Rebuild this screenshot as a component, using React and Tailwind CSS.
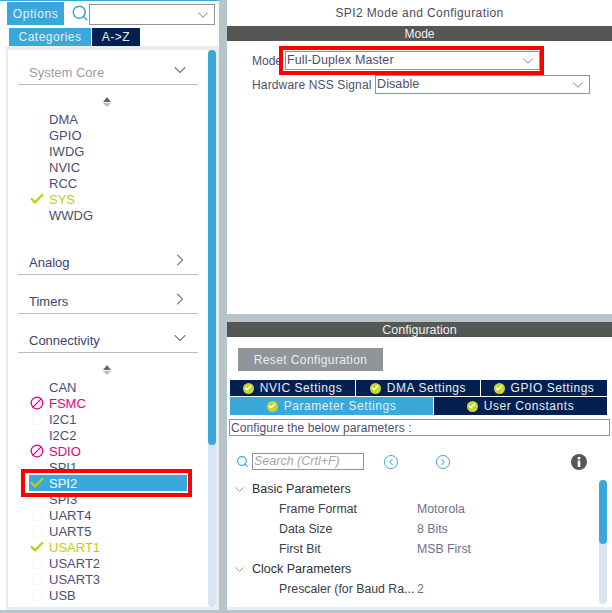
import React from 'react';
import { Search, ChevronDown, ChevronRight, ChevronLeft, Check, Ban } from 'lucide-react';

const systemCore = [
  { name: 'DMA' }, { name: 'GPIO' }, { name: 'IWDG' }, { name: 'NVIC' }, { name: 'RCC' },
  { name: 'SYS', state: 'ok' }, { name: 'WWDG' },
];

const connectivity = [
  { name: 'CAN' }, { name: 'FSMC', state: 'off' }, { name: 'I2C1' }, { name: 'I2C2' },
  { name: 'SDIO', state: 'off' }, { name: 'SPI1' }, { name: 'SPI2', state: 'selected' }, { name: 'SPI3' },
  { name: 'UART4' }, { name: 'UART5' }, { name: 'USART1', state: 'ok' }, { name: 'USART2' },
  { name: 'USART3' }, { name: 'USB' },
];

function SortArrows() {
  return (
    <div className="mt-3 ml-[95px] flex h-[10px] w-2 flex-col items-center gap-px">
      <div className="h-0 w-0 border-x-4 border-b-[5px] border-x-transparent border-b-[#666]"></div>
      <div className="h-0 w-0 border-x-4 border-t-[4px] border-x-transparent border-t-[#bbb]"></div>
    </div>
  );
}

function SectionHeader({ title, open, dim, className }) {
  return (
    <div className={`ml-[10px] flex h-[23px] w-[180px] items-start justify-between border-b border-[#b4bfc6] pl-[11px] pr-[8px] text-[13px] leading-[22px] ${dim ? 'text-[#9a9ca3]' : 'text-[#3a4474]'} ${className}`}>
      <span>{title}</span>
      {open
        ? <ChevronDown className="-mt-0.5 h-5 w-5 shrink-0 text-[#7b7f84]" strokeWidth={1.3} />
        : <ChevronRight className="-mt-0.5 h-5 w-5 shrink-0 text-[#7b7f84]" strokeWidth={1.3} />}
    </div>
  );
}

function PeripheralRow({ item }) {
  if (item.state === 'selected') {
    return (
      <div className="relative ml-[21px] h-4 w-[158px]">
        <div className="absolute -top-1.5 -bottom-1.5 -left-2 -right-[5px] z-10 border-4 border-[#f00] bg-white"></div>
        <div className="relative z-20 flex h-4 items-center bg-[#39a9dc] text-[13px] leading-[18px] text-white">
          <span className="flex w-5 justify-center pr-1"><Check className="h-4 w-4 text-[#c3d100]" strokeWidth={3.5} /></span>
          <span className="pt-[2px]">{item.name}</span>
        </div>
      </div>
    );
  }
  const color = item.state === 'ok' ? 'text-[#bfcf0c]' : item.state === 'off' ? 'text-[#e5007e]' : 'text-[#4b4f6e]';
  return (
    <div className={`ml-[21px] flex h-4 w-[158px] items-center text-[13px] leading-[18px] ${color}`}>
      <span className="flex w-5 justify-center pr-1">
        {item.state === 'ok' && <Check className="h-4 w-4 text-[#bfcf0c]" strokeWidth={3.5} />}
        {item.state === 'off' && <Ban className="h-[14px] w-[14px] -scale-x-100 text-[#e5007e]" strokeWidth={2.2} />}
        {!item.state && <span className="h-[11px] w-[10px] border border-[#f8f9fa]"></span>}
      </span>
      <span className="pt-[2px]">{item.name}</span>
    </div>
  );
}

function Dropdown({ value, className }) {
  return (
    <div className={`flex h-[19px] items-center justify-between border border-[#8f9499] pl-[1px] pr-[2px] text-[12.5px] leading-none tracking-[0.1px] text-[#4b4f6e] ${className}`}>
      <span>{value}</span>
      <ChevronDown className="h-[18px] w-[18px] text-[#7b7f84]" strokeWidth={1.3} />
    </div>
  );
}

function TabBtn({ label, active, className }) {
  return (
    <div className={`flex items-center justify-center gap-[6px] text-[12px] tracking-[0.55px] text-[#e9eef2] ${active ? 'bg-[#39a9dc]' : 'bg-[#002051]'} ${className}`}>
      <span className="flex h-[11px] w-[11px] items-center justify-center rounded-full bg-[#c9d62c]">
        <Check className="h-2 w-2 text-white" strokeWidth={4} />
      </span>
      {label}
    </div>
  );
}

function ParamGroup({ title }) {
  return (
    <div className="flex h-5 items-center pl-[5px] text-[12.5px] text-[#2c3038]">
      <ChevronDown className="mr-[5px] h-[15px] w-[15px] text-[#7b7f84]" strokeWidth={1.3} />
      {title}
    </div>
  );
}

function ParamRow({ label, value }) {
  return (
    <div className="flex h-5 items-center pl-[52px] text-[12.3px]">
      <span className="w-[138px] text-[#3c4048]">{label}</span>
      <span className="text-[#6a7388]">{value}</span>
    </div>
  );
}

export default function App() {
  return (
    <div className="flex h-[613px] w-[612px] overflow-hidden bg-[#b9c4ca] font-['Liberation_Sans',Arial,sans-serif]">
      {/* left tree */}
      <div className="flex h-[610px] w-[219px] shrink-0 flex-col border-t border-[#39a9dc] bg-white">
        <div className="flex h-[27px] items-start pt-[1px] pl-[7px]">
          <div className="flex h-[23px] w-[57px] items-center justify-center bg-[#39a9dc] text-[12px] tracking-[0.6px] text-[#e9eef2]">Options</div>
          <Search className="ml-[7px] mt-[2px] h-[18px] w-[18px] text-[#39a9dc]" strokeWidth={2} />
          <div className="mt-[2px] flex h-[21px] w-[126px] items-center justify-end border border-[#8f9499] pr-[2px]">
            <ChevronDown className="h-[18px] w-[18px] text-[#7b7f84]" strokeWidth={1.3} />
          </div>
        </div>
        <div className="ml-[9px] flex h-[18px] gap-px text-[12px] tracking-[0.5px]">
          <div className="flex w-[82px] items-center justify-center bg-[#39a9dc] text-[#e9eef2]">Categories</div>
          <div className="flex w-[48px] items-center justify-center bg-[#002051] text-[#e9eef2]">A-&gt;Z</div>
        </div>
        <div className="ml-[6px] flex min-h-0 flex-1 bg-[#e9eef2] pt-1 pr-[3px] pb-[3px] pl-[2px]">
          <div className="relative flex flex-1 bg-white">
            <div className="w-[200px]">
              <SectionHeader title="System Core" open dim className="mt-3" />
              <SortArrows />
              <div className="mt-1">
                {systemCore.map((item) => <PeripheralRow key={item.name} item={item} />)}
              </div>
              <SectionHeader title="Analog" className="mt-[29px]" />
              <SectionHeader title="Timers" className="mt-4" />
              <SectionHeader title="Connectivity" open className="mt-4" />
              <SortArrows />
              <div className="mt-1">
                {connectivity.map((item) => <PeripheralRow key={item.name} item={item} />)}
              </div>
            </div>
            <div className="w-2 rounded-full bg-[#d8e6f4]">
              <div className="h-[395px] rounded-full bg-[#39a9dc]"></div>
            </div>
          </div>
        </div>
      </div>

      {/* right side */}
      <div className="ml-2 flex w-[385px] flex-col">
        <div className="h-[314px] bg-white">
          <div className="flex h-[26px] items-center justify-center text-[12px] tracking-[0.4px] text-[#4b4f5e]">SPI2 Mode and Configuration</div>
          <div className="flex h-[15px] items-center justify-center bg-[#555755] text-[12px] text-[#f0f0f0]">Mode</div>
          <div className="mt-[10px] flex items-center pl-[25px] text-[12px] text-[#4b4f6e]">
            <span className="w-[33px] shrink-0">Mode</span>
            <div className="relative">
              <Dropdown value="Full-Duplex Master" className="w-[255px]" />
              <div className="absolute -top-[5px] -bottom-[5px] -left-1.5 -right-1 border-4 border-[#f00]"></div>
            </div>
          </div>
          <div className="mt-[5px] flex items-center pl-[25px] text-[12px] text-[#4b4f6e]">
            <span className="w-[123px] shrink-0 whitespace-nowrap tracking-[0.15px]">Hardware NSS Signal</span>
            <Dropdown value="Disable" className="w-[215px]" />
          </div>
        </div>

        <div className="mt-2 flex h-[288px] flex-col bg-white">
          <div className="flex h-[15px] shrink-0 items-center justify-center bg-[#555755] pt-px text-[12.5px] text-[#f0f0f0]">Configuration</div>
          <div className="mt-[11px] ml-[11px] flex h-[23px] w-[145px] shrink-0 items-center justify-center bg-[#8f9599] text-[12px] tracking-[0.4px] text-[#e9eef2]">Reset Configuration</div>
          <div className="mt-[9px] ml-[3px] flex h-4 w-[377px] shrink-0 gap-px">
            <TabBtn label="NVIC Settings" className="w-[125px]" />
            <TabBtn label="DMA Settings" className="w-[124px]" />
            <TabBtn label="GPIO Settings" className="w-[126px]" />
          </div>
          <div className="mt-px ml-[3px] flex h-[18px] w-[377px] shrink-0 gap-px">
            <TabBtn label="Parameter Settings" active className="w-[203px]" />
            <TabBtn label="User Constants" className="w-[173px]" />
          </div>
          <div className="mt-1 ml-[2px] flex h-[17px] w-[381px] shrink-0 items-center border border-[#8f9499] pl-[1px] text-[12px] tracking-[0.1px] text-[#4b4f6e]">Configure the below parameters :</div>
          <div className="relative mt-[17px] ml-[9px] flex h-[17px] shrink-0 items-center">
            <Search className="h-[13px] w-[13px] text-[#39a9dc]" strokeWidth={2.2} />
            <div className="ml-[3px] flex h-[17px] w-[112px] items-center border border-[#8f9499] pl-[1px] text-[12.5px] italic text-[#a3a6aa]">Search (Crtl+F)</div>
            <div className="ml-5 flex h-[14px] w-[14px] items-center justify-center rounded-full border border-[#39a9dc]">
              <ChevronLeft className="h-[10px] w-[10px] text-[#39a9dc]" strokeWidth={2.5} />
            </div>
            <div className="ml-[38px] flex h-[14px] w-[14px] items-center justify-center rounded-full border border-[#39a9dc]">
              <ChevronRight className="h-[10px] w-[10px] text-[#39a9dc]" strokeWidth={2.5} />
            </div>
            <svg className="ml-[121px] h-4 w-4" viewBox="0 0 16 16">
              <circle cx="8" cy="8" r="8" fill="#555755" />
              <rect x="6.7" y="3" width="2.6" height="2.4" fill="#fff" />
              <rect x="6.7" y="6.6" width="2.6" height="6.4" fill="#fff" />
            </svg>
          </div>
          <div className="mt-[9px] flex flex-1">
            <div className="w-[372px]">
              <ParamGroup title="Basic Parameters" />
              <ParamRow label="Frame Format" value="Motorola" />
              <ParamRow label="Data Size" value="8 Bits" />
              <ParamRow label="First Bit" value="MSB First" />
              <ParamGroup title="Clock Parameters" />
              <ParamRow label="Prescaler (for Baud Ra..." value="2" />
            </div>
            <div className="mt-[1px] h-[124px] w-2 rounded-full bg-[#d8e6f4]">
              <div className="h-[64px] rounded-full bg-[#39a9dc]"></div>
            </div>
          </div>
          <div className="h-[3px] shrink-0 bg-[#e9eef2]"></div>
        </div>
      </div>
    </div>
  );
}
